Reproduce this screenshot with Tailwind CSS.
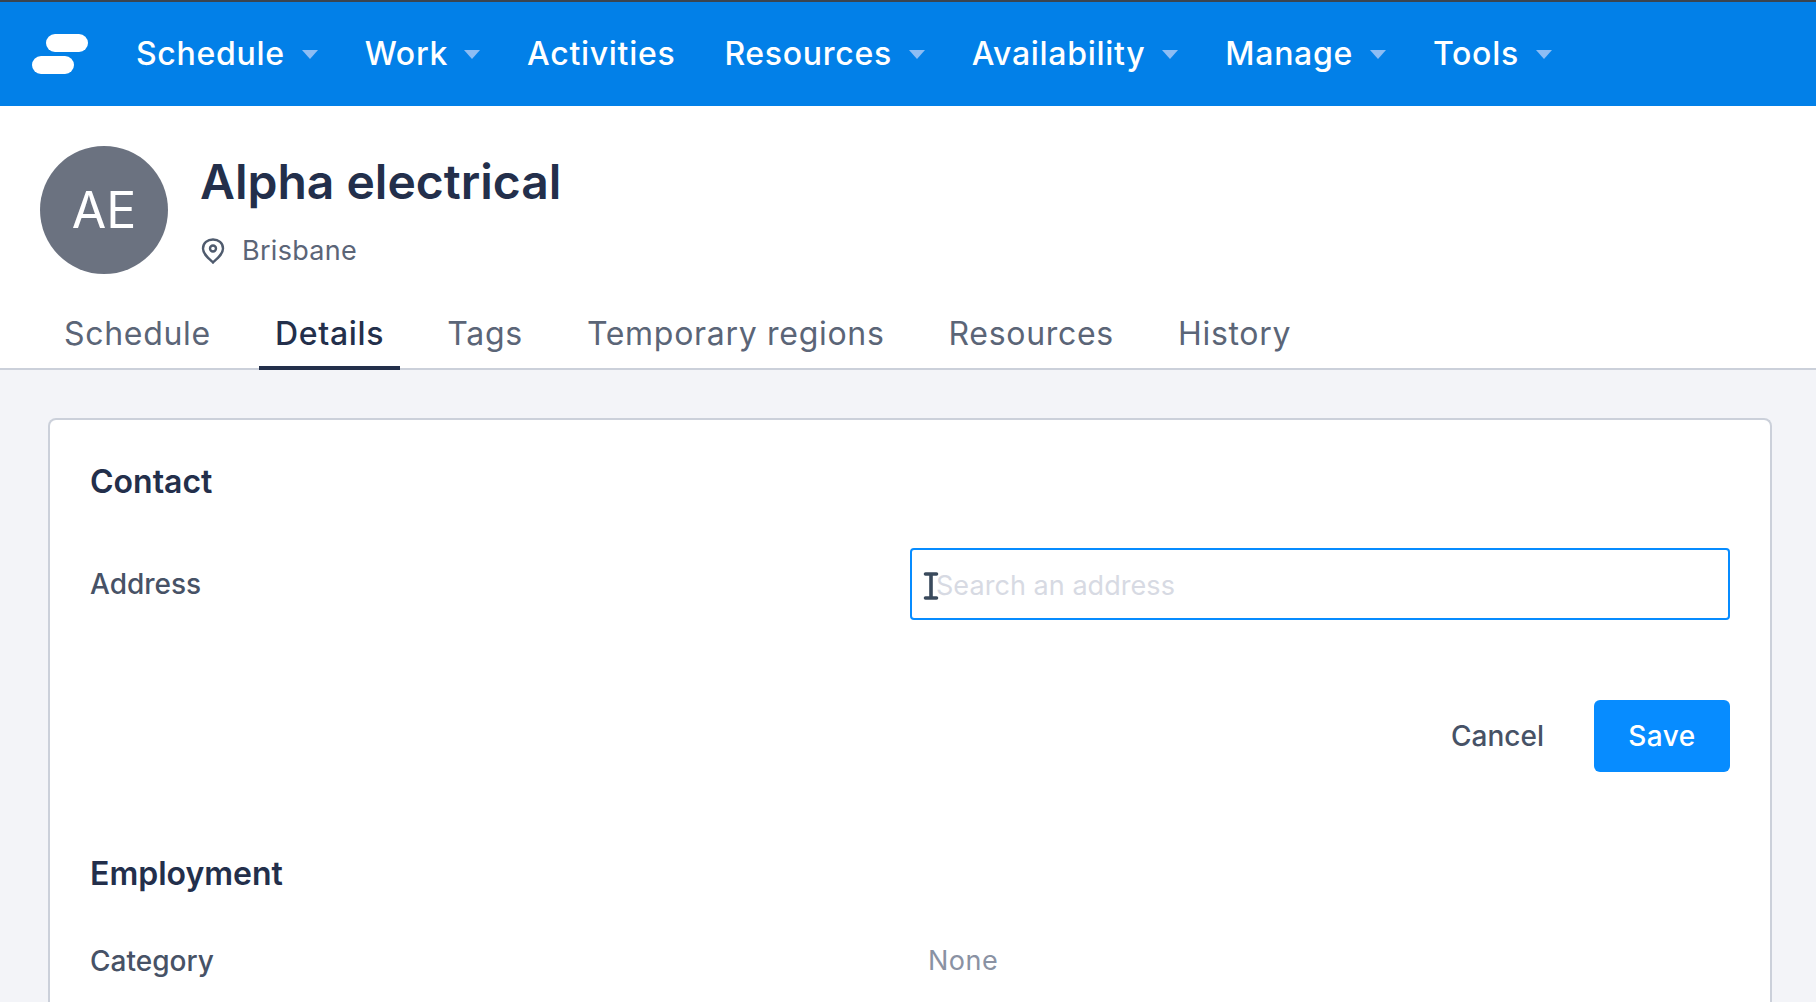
<!DOCTYPE html>
<html lang="en">
<head>
  <meta charset="UTF-8" />
  <title>Alpha electrical</title>
  <script src="https://cdn.jsdelivr.net/npm/@tailwindcss/browser@4"></script>
</head>
<body class="bg-[#f3f4f8] h-[1002px] overflow-hidden font-['Inter',sans-serif] text-[#232f4b]">

  <!-- Top nav -->
  <nav class="h-[106px] bg-[#0280e8] border-t-2 border-[#3a4450] flex items-center pl-[32px] text-white text-[32px] font-[450] tracking-[0.7px]">
    <svg class="w-[56px] h-[40px] mr-[48px]" viewBox="0 0 56 40">
      <rect x="14" y="0" width="42" height="18" rx="9" fill="#fff" />
      <rect x="0" y="22" width="42" height="18" rx="9" fill="#fff" />
    </svg>
    <div class="flex items-center gap-[17px] mr-[47px]">Schedule <span class="w-0 h-0 border-x-[8px] border-t-[9px] border-x-transparent border-t-[#8dbdf4]"></span></div>
    <div class="flex items-center gap-[16px] mr-[47px]">Work <span class="w-0 h-0 border-x-[8px] border-t-[9px] border-x-transparent border-t-[#8dbdf4]"></span></div>
    <div class="mr-[49px]">Activities</div>
    <div class="flex items-center gap-[17px] mr-[47px]">Resources <span class="w-0 h-0 border-x-[8px] border-t-[9px] border-x-transparent border-t-[#8dbdf4]"></span></div>
    <div class="flex items-center gap-[17px] mr-[47px]">Availability <span class="w-0 h-0 border-x-[8px] border-t-[9px] border-x-transparent border-t-[#8dbdf4]"></span></div>
    <div class="flex items-center gap-[17px] mr-[47px]">Manage <span class="w-0 h-0 border-x-[8px] border-t-[9px] border-x-transparent border-t-[#8dbdf4]"></span></div>
    <div class="flex items-center gap-[17px]">Tools <span class="w-0 h-0 border-x-[8px] border-t-[9px] border-x-transparent border-t-[#8dbdf4]"></span></div>
  </nav>

  <!-- Header + tabs -->
  <header class="bg-white h-[264px] border-b-2 border-[#cbd0da] flex flex-col">
    <div class="flex pl-[40px] pt-[40px]">
      <div class="w-[128px] h-[128px] rounded-full bg-[#6b7280] text-white text-[50px] flex items-center justify-center mr-[32px]">AE</div>
      <div>
        <h1 class="text-[48px] leading-[56px] font-semibold mt-[8px]">Alpha electrical</h1>
        <div class="flex items-center mt-[21px] text-[#5b6577] text-[27px] tracking-[0.3px]">
          <svg class="w-[24px] h-[26px] ml-[1px] mr-[17px]" viewBox="0 0 24 26" fill="none" stroke="#4f5b6e" stroke-width="2.4">
            <path d="M12 24.5 C7 20 2 16 2 10.5 C2 5 6.5 1.5 12 1.5 C17.5 1.5 22 5 22 10.5 C22 16 17 20 12 24.5 Z" />
            <circle cx="12" cy="10.5" r="3" />
          </svg>
          Brisbane
        </div>
      </div>
    </div>
    <div class="flex mt-auto pl-[48px] text-[32px] leading-[46px] text-[#5b6577] tracking-[0.7px]">
      <div class="px-[16px] h-[57px] mr-[32px]">Schedule</div>
      <div class="px-[16px] h-[59px] mr-[31px] -mb-[2px] border-b-[4px] border-[#232f4b] text-[#232f4b] font-medium">Details</div>
      <div class="px-[16px] h-[57px] mr-[32px]">Tags</div>
      <div class="px-[16px] h-[57px] mr-[32px]">Temporary regions</div>
      <div class="px-[16px] h-[57px] mr-[32px]">Resources</div>
      <div class="px-[16px] h-[57px]">History</div>
    </div>
  </header>

  <!-- Card -->
  <main class="pt-[48px] pl-[48px] pr-[44px]">
    <section class="bg-white border-2 border-b-0 border-[#cbd0da] rounded-t-[8px] h-[584px] px-[40px]">
      <h2 class="text-[32px] leading-[40px] font-semibold mt-[42px]">Contact</h2>
      <div class="flex items-center mt-[46px]">
        <div class="w-[820px] text-[28px] text-[#475266] font-medium">Address</div>
        <div class="relative flex-1">
          <input placeholder="Search an address" class="w-full h-[72px] border-2 border-[#078cff] rounded-[4px] pl-[24px] pt-[2px] text-[27px] tracking-[0.05px] placeholder:text-[#d7dae3] outline-none" />
          <svg class="absolute left-[13px] top-[24px] w-[16px] h-[28px]" viewBox="0 0 16 28" fill="none" stroke="#3a4a5c" stroke-width="3.6" stroke-linecap="round">
            <path d="M2.5 2 H13.5 M8 2 V26 M2.5 26 H13.5" />
          </svg>
        </div>
      </div>
      <div class="flex justify-end items-center mt-[80px]">
        <button class="text-[28px] text-[#475266] font-medium mr-[50px]">Cancel</button>
        <button class="w-[136px] h-[72px] rounded-[6px] bg-[#078cff] text-white text-[28px] font-medium tracking-[0.5px]">Save</button>
      </div>
      <h2 class="text-[32px] leading-[40px] font-semibold mt-[82px]">Employment</h2>
      <div class="flex items-center mt-[46px]">
        <div class="w-[838px] text-[28px] text-[#475266] font-medium">Category</div>
        <div class="text-[27px] text-[#8a92a3] tracking-[0.5px]">None</div>
      </div>
    </section>
  </main>

</body>
</html>
